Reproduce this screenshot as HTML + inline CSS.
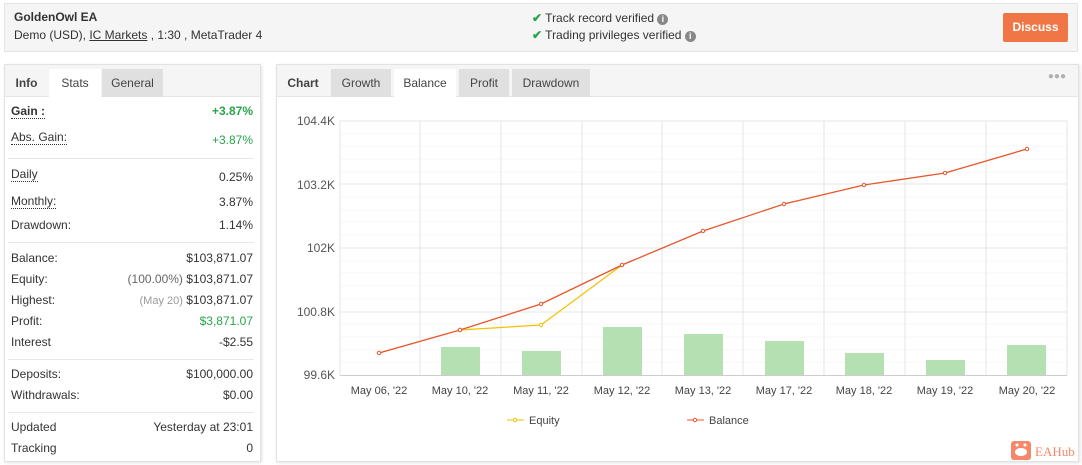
<!DOCTYPE html><html><head><style>
*{margin:0;padding:0;box-sizing:border-box}
body{width:1082px;height:465px;background:#fff;font-family:"Liberation Sans",sans-serif;font-size:12px;color:#333;position:relative;overflow:hidden}
.a{position:absolute;white-space:nowrap}
.top{left:4px;top:3px;width:1074px;height:49px;background:#f5f5f5;border:1px solid #e4e4e4}
.panel{background:#fff;border:1px solid #e2e2e2;box-shadow:1px 1px 3px rgba(0,0,0,.12)}
.tabbar{background:#f5f5f5;border-bottom:1px solid #e6e6e6}
.tab{position:absolute;top:4px;height:28px;line-height:28px;text-align:center;background:#e0e0e0;color:#444}
.r{position:absolute;left:11px;right:9px;height:16px;line-height:16px}
.r span.v{position:absolute;right:0}
.u{border-bottom:1px dotted #333}
.sep{position:absolute;left:8px;right:8px;height:1px;background:#e8e8e8}
.g{color:#2aa44a}
.gr{color:#999}
</style></head><body>
<div class="a top"></div>
<div class="a" style="left:14px;top:10px;font-weight:bold;font-size:12px">GoldenOwl EA</div>
<div class="a" style="left:14px;top:28px">Demo (USD), <span style="text-decoration:underline">IC Markets</span> , 1:30 , MetaTrader 4</div>
<div class="a" style="left:532px;top:11px"><span style="color:#2aa44a;font-weight:bold">✔</span> Track record verified <span style="display:inline-block;width:11px;height:11px;border-radius:50%;background:#888;color:#fff;font-size:9px;line-height:11px;text-align:center;font-weight:bold">i</span></div>
<div class="a" style="left:532px;top:28px"><span style="color:#2aa44a;font-weight:bold">✔</span> Trading privileges verified <span style="display:inline-block;width:11px;height:11px;border-radius:50%;background:#888;color:#fff;font-size:9px;line-height:11px;text-align:center;font-weight:bold">i</span></div>
<div class="a" style="left:1003px;top:13px;width:65px;height:29px;background:#f07645;border-radius:2px;color:#fff;font-weight:bold;text-align:center;line-height:29px">Discuss</div>

<div class="a panel" style="left:4px;top:64px;width:257px;height:398px">
 <div class="a tabbar" style="left:0;top:0;width:255px;height:32px"></div>
 <div class="tab" style="left:0;background:transparent;width:43px;font-weight:bold">Info</div>
 <div class="tab" style="left:44px;width:52px;background:#fff;height:29px">Stats</div>
 <div class="tab" style="left:97px;width:61px">General</div>
</div>
<div class="a" style="left:0;top:0;width:262px;height:465px">
 <div class="r" style="top:103px;font-weight:bold"><span class="u">Gain :</span><span class="v g">+3.87%</span></div>
 <div class="r" style="top:129px"><span class="u">Abs. Gain:</span><span class="v g" style="top:3px">+3.87%</span></div>
 <div class="sep" style="top:158px"></div>
 <div class="r" style="top:166px"><span class="u">Daily</span><span class="v" style="top:3px">0.25%</span></div>
 <div class="r" style="top:193px"><span class="u">Monthly:</span><span class="v" style="top:1px">3.87%</span></div>
 <div class="r" style="top:217px">Drawdown:<span class="v">1.14%</span></div>
 <div class="sep" style="top:242px"></div>
 <div class="r" style="top:250px">Balance:<span class="v">$103,871.07</span></div>
 <div class="r" style="top:271px">Equity:<span class="v"><span style="color:#666">(100.00%)</span> $103,871.07</span></div>
 <div class="r" style="top:292px">Highest:<span class="v"><span class="gr" style="font-size:11px">(May 20)</span> $103,871.07</span></div>
 <div class="r" style="top:313px">Profit:<span class="v g">$3,871.07</span></div>
 <div class="r" style="top:334px">Interest<span class="v">-$2.55</span></div>
 <div class="sep" style="top:359px"></div>
 <div class="r" style="top:366px">Deposits:<span class="v">$100,000.00</span></div>
 <div class="r" style="top:387px">Withdrawals:<span class="v">$0.00</span></div>
 <div class="sep" style="top:412px"></div>
 <div class="r" style="top:419px">Updated<span class="v">Yesterday at 23:01</span></div>
 <div class="r" style="top:440px">Tracking<span class="v">0</span></div>
</div>

<div class="a panel" style="left:276px;top:64px;width:803px;height:398px">
 <div class="a tabbar" style="left:0;top:0;width:801px;height:32px"></div>
 <div class="tab" style="left:0;width:52px;background:transparent;font-weight:bold">Chart</div>
 <div class="tab" style="left:54px;width:60px">Growth</div>
 <div class="tab" style="left:117px;width:62px;background:#fff;height:29px">Balance</div>
 <div class="tab" style="left:182px;width:50px">Profit</div>
 <div class="tab" style="left:235px;width:78px">Drawdown</div>
 <div class="a" style="right:12px;top:6px;color:#b0b0b0;font-size:10px;letter-spacing:0px">●●●</div>
</div>
<svg class="a" style="left:0;top:0" width="1082" height="465" font-family="Liberation Sans, sans-serif">
 <g stroke="#f7f7f7">
  <line x1="340" x2="1067" y1="134" y2="134"/><line x1="340" x2="1067" y1="146" y2="146"/><line x1="340" x2="1067" y1="159" y2="159"/><line x1="340" x2="1067" y1="172" y2="172"/>
  <line x1="340" x2="1067" y1="197" y2="197"/><line x1="340" x2="1067" y1="210" y2="210"/><line x1="340" x2="1067" y1="222" y2="222"/><line x1="340" x2="1067" y1="235" y2="235"/>
  <line x1="340" x2="1067" y1="261" y2="261"/><line x1="340" x2="1067" y1="273" y2="273"/><line x1="340" x2="1067" y1="286" y2="286"/><line x1="340" x2="1067" y1="299" y2="299"/>
  <line x1="340" x2="1067" y1="324" y2="324"/><line x1="340" x2="1067" y1="337" y2="337"/><line x1="340" x2="1067" y1="350" y2="350"/><line x1="340" x2="1067" y1="362" y2="362"/>
 </g>
 <g stroke="#e6e6e6">
  <line x1="340" x2="1067" y1="121" y2="121"/><line x1="340" x2="1067" y1="184" y2="184"/><line x1="340" x2="1067" y1="248" y2="248"/><line x1="340" x2="1067" y1="312" y2="312"/>
  <line x1="420" x2="420" y1="121" y2="375"/><line x1="501" x2="501" y1="121" y2="375"/><line x1="582" x2="582" y1="121" y2="375"/><line x1="662" x2="662" y1="121" y2="375"/><line x1="743" x2="743" y1="121" y2="375"/><line x1="824" x2="824" y1="121" y2="375"/><line x1="905" x2="905" y1="121" y2="375"/><line x1="986" x2="986" y1="121" y2="375"/><line x1="1067" x2="1067" y1="121" y2="375"/><line x1="340" x2="340" y1="121" y2="375"/>
 </g>
 <line x1="340" x2="1067" y1="375.5" y2="375.5" stroke="#ccc"/>
 <g fill="#b5e0b2">
  <rect x="441" y="347" width="39" height="28"/><rect x="522" y="351" width="39" height="24"/><rect x="603" y="327" width="39" height="48"/><rect x="684" y="334" width="39" height="41"/><rect x="765" y="341" width="39" height="34"/><rect x="845" y="353" width="39" height="22"/><rect x="926" y="360" width="39" height="15"/><rect x="1007" y="345" width="39" height="30"/>
 </g>
 <g font-size="12" fill="#555" text-anchor="end">
  <text x="335" y="125">104.4K</text><text x="335" y="189">103.2K</text><text x="335" y="252">102K</text><text x="335" y="316">100.8K</text><text x="335" y="379">99.6K</text>
 </g>
 <g font-size="11" fill="#444" text-anchor="middle">
  <text x="379" y="394">May 06, '22</text><text x="460" y="394">May 10, '22</text><text x="541" y="394">May 11, '22</text><text x="622" y="394">May 12, '22</text><text x="703" y="394">May 13, '22</text><text x="784" y="394">May 17, '22</text><text x="864" y="394">May 18, '22</text><text x="945" y="394">May 19, '22</text><text x="1027" y="394">May 20, '22</text>
 </g>
 <polyline points="460,330 541,325 622,265" fill="none" stroke="#f2c200" stroke-width="1.2"/>
 <g fill="#fff" stroke="#f2c200"><circle cx="460" cy="330" r="1.7"/><circle cx="541" cy="325" r="1.7"/></g>
 <polyline points="379,353 460,330 541,304 622,265 703,231 784,204 864,185 945,173 1027,149" fill="none" stroke="#e8552a" stroke-width="1.3"/>
 <g fill="#fff" stroke="#e8552a"><circle cx="379" cy="353" r="1.7"/><circle cx="460" cy="330" r="1.7"/><circle cx="541" cy="304" r="1.7"/><circle cx="622" cy="265" r="1.7"/><circle cx="703" cy="231" r="1.7"/><circle cx="784" cy="204" r="1.7"/><circle cx="864" cy="185" r="1.7"/><circle cx="945" cy="173" r="1.7"/><circle cx="1027" cy="149" r="1.7"/></g>
 <line x1="507" x2="524" y1="420" y2="420" stroke="#f2c200"/><circle cx="515" cy="420" r="1.7" fill="#fff" stroke="#f2c200"/>
 <text x="529" y="424" font-size="11" fill="#444">Equity</text>
 <line x1="687" x2="704" y1="420" y2="420" stroke="#e8552a"/><circle cx="695" cy="420" r="1.7" fill="#fff" stroke="#e8552a"/>
 <text x="709" y="424" font-size="11" fill="#444">Balance</text>
 <rect x="1011" y="441" width="20" height="19" rx="3" fill="#f4896a"/>
 <ellipse cx="1021" cy="452" rx="6" ry="4" fill="#fff"/><circle cx="1017" cy="445" r="1.5" fill="#fff"/><circle cx="1025" cy="445" r="1.5" fill="#fff"/>
 <text x="1035" y="456" font-size="13" fill="#f4896a" font-family="Liberation Serif, serif">EAHub</text>
</svg>
</body></html>
